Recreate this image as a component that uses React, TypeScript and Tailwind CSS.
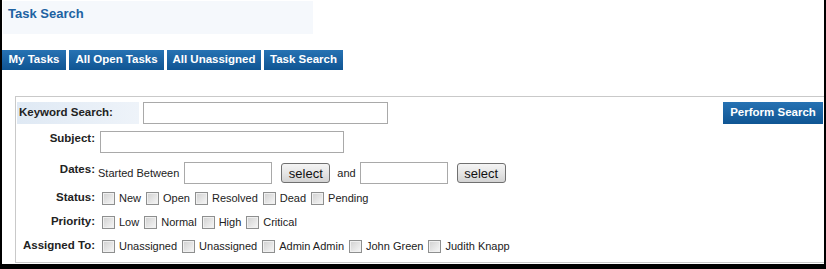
import React from 'react';

const font = { fontFamily: '"Liberation Sans", Arial, sans-serif' };

function Check({ label }: { label: string }) {
  return (
    <label className="flex items-center gap-[4px] mr-[5px]">
      <span className="w-[13px] h-[13px] border border-[#8e8f8f] bg-gradient-to-br from-[#d0d0d0] to-[#f7f7f7] shadow-[inset_0_0_0_1px_#f0f0f0]"></span>
      <span className="text-[11px] text-[#222]">{label}</span>
    </label>
  );
}

function SelectBtn() {
  return (
    <button className="h-[20px] w-[49px] border border-[#707070] rounded-[3px] bg-gradient-to-b from-[#f4f4f4] via-[#e6e6e6] to-[#d3d3d3] text-[13px] leading-none text-[#111]">
      select
    </button>
  );
}

export default function App() {
  const tabs = [
    { name: 'My Tasks', w: 'w-[64px]' },
    { name: 'All Open Tasks', w: 'w-[95px]' },
    { name: 'All Unassigned', w: 'w-[94px]' },
    { name: 'Task Search', w: 'w-[79px]' }
  ];

  return (
    <div className="w-[826px] h-[269px] bg-black pl-[2px] pr-[2px] pb-[5px]" style={font}>
      <div className="w-full h-full bg-white flex flex-col overflow-hidden">
        {/* Title */}
        <div className="mt-px ml-px w-[310px] h-[33px] bg-[#f5f8fc] pl-[5px] pt-[5px]">
          <h1 className="text-[13px] leading-[16px] font-bold text-[#2062a2]">Task Search</h1>
        </div>

        {/* Tabs */}
        <div className="mt-[16px] flex gap-[3px]">
          {tabs.map(t => (
            <div
              key={t.name}
              className={`${t.w} h-[20px] flex items-center justify-center bg-gradient-to-b from-[#2672b3] to-[#0f5593] text-white text-[11.5px] font-bold`}
            >
              {t.name}
            </div>
          ))}
        </div>

        {/* Search panel */}
        <div className="mt-[26px] ml-[13px] h-[167px] border-t border-l border-b border-[#c9c9c9] flex flex-col">
          {/* Keyword */}
          <div className="mt-[5px] flex items-center justify-between pr-px">
            <div className="flex items-center">
              <div className="ml-px w-[122px] h-[22px] flex items-center pl-[2px] bg-gradient-to-r from-[#dfe9f4] to-[#eef3f9] text-[11.5px] font-bold text-[#222]">
                Keyword Search:
              </div>
              <input className="ml-[4px] w-[245px] h-[22px] border border-[#a9a9a9] bg-white" />
            </div>
            <button className="w-[100px] h-[22px] bg-gradient-to-b from-[#2672b3] to-[#0f5593] text-white text-[11.5px] font-bold">
              Perform Search
            </button>
          </div>

          {/* Subject */}
          <div className="mt-[7px] flex items-start">
            <div className="w-[79px] text-right text-[11.5px] leading-[14px] font-bold text-[#222]">Subject:</div>
            <input className="ml-[5px] w-[244px] h-[22px] border border-[#a9a9a9] bg-white" />
          </div>

          {/* Dates */}
          <div className="mt-[9px] flex items-start">
            <div className="w-[79px] text-right text-[11.5px] leading-[14px] font-bold text-[#222]">Dates:</div>
            <div className="ml-[3px] flex items-center h-[22px] text-[11px] text-[#222]">
              <span>Started Between</span>
              <input className="ml-[5px] w-[88px] h-[22px] border border-[#a9a9a9] bg-white" />
              <span className="ml-[9px]"><SelectBtn /></span>
              <span className="ml-[7px]">and</span>
              <input className="ml-[4px] w-[88px] h-[22px] border border-[#a9a9a9] bg-white" />
              <span className="ml-[9px]"><SelectBtn /></span>
            </div>
          </div>

          {/* Status */}
          <div className="mt-[6px] h-[16px] flex items-center">
            <div className="w-[79px] text-right text-[11.5px] font-bold text-[#222]">Status:</div>
            <div className="ml-[7px] flex items-center">
              <Check label="New" />
              <Check label="Open" />
              <Check label="Resolved" />
              <Check label="Dead" />
              <Check label="Pending" />
            </div>
          </div>

          {/* Priority */}
          <div className="mt-[8px] h-[16px] flex items-center">
            <div className="w-[79px] text-right text-[11.5px] font-bold text-[#222]">Priority:</div>
            <div className="ml-[7px] flex items-center">
              <Check label="Low" />
              <Check label="Normal" />
              <Check label="High" />
              <Check label="Critical" />
            </div>
          </div>

          {/* Assigned */}
          <div className="mt-[8px] h-[16px] flex items-center">
            <div className="w-[79px] text-right text-[11.5px] font-bold text-[#222] whitespace-nowrap">Assigned To:</div>
            <div className="ml-[7px] flex items-center">
              <Check label="Unassigned" />
              <Check label="Unassigned" />
              <Check label="Admin Admin" />
              <Check label="John Green" />
              <Check label="Judith Knapp" />
            </div>
          </div>
        </div>
      </div>
    </div>
  );
}
